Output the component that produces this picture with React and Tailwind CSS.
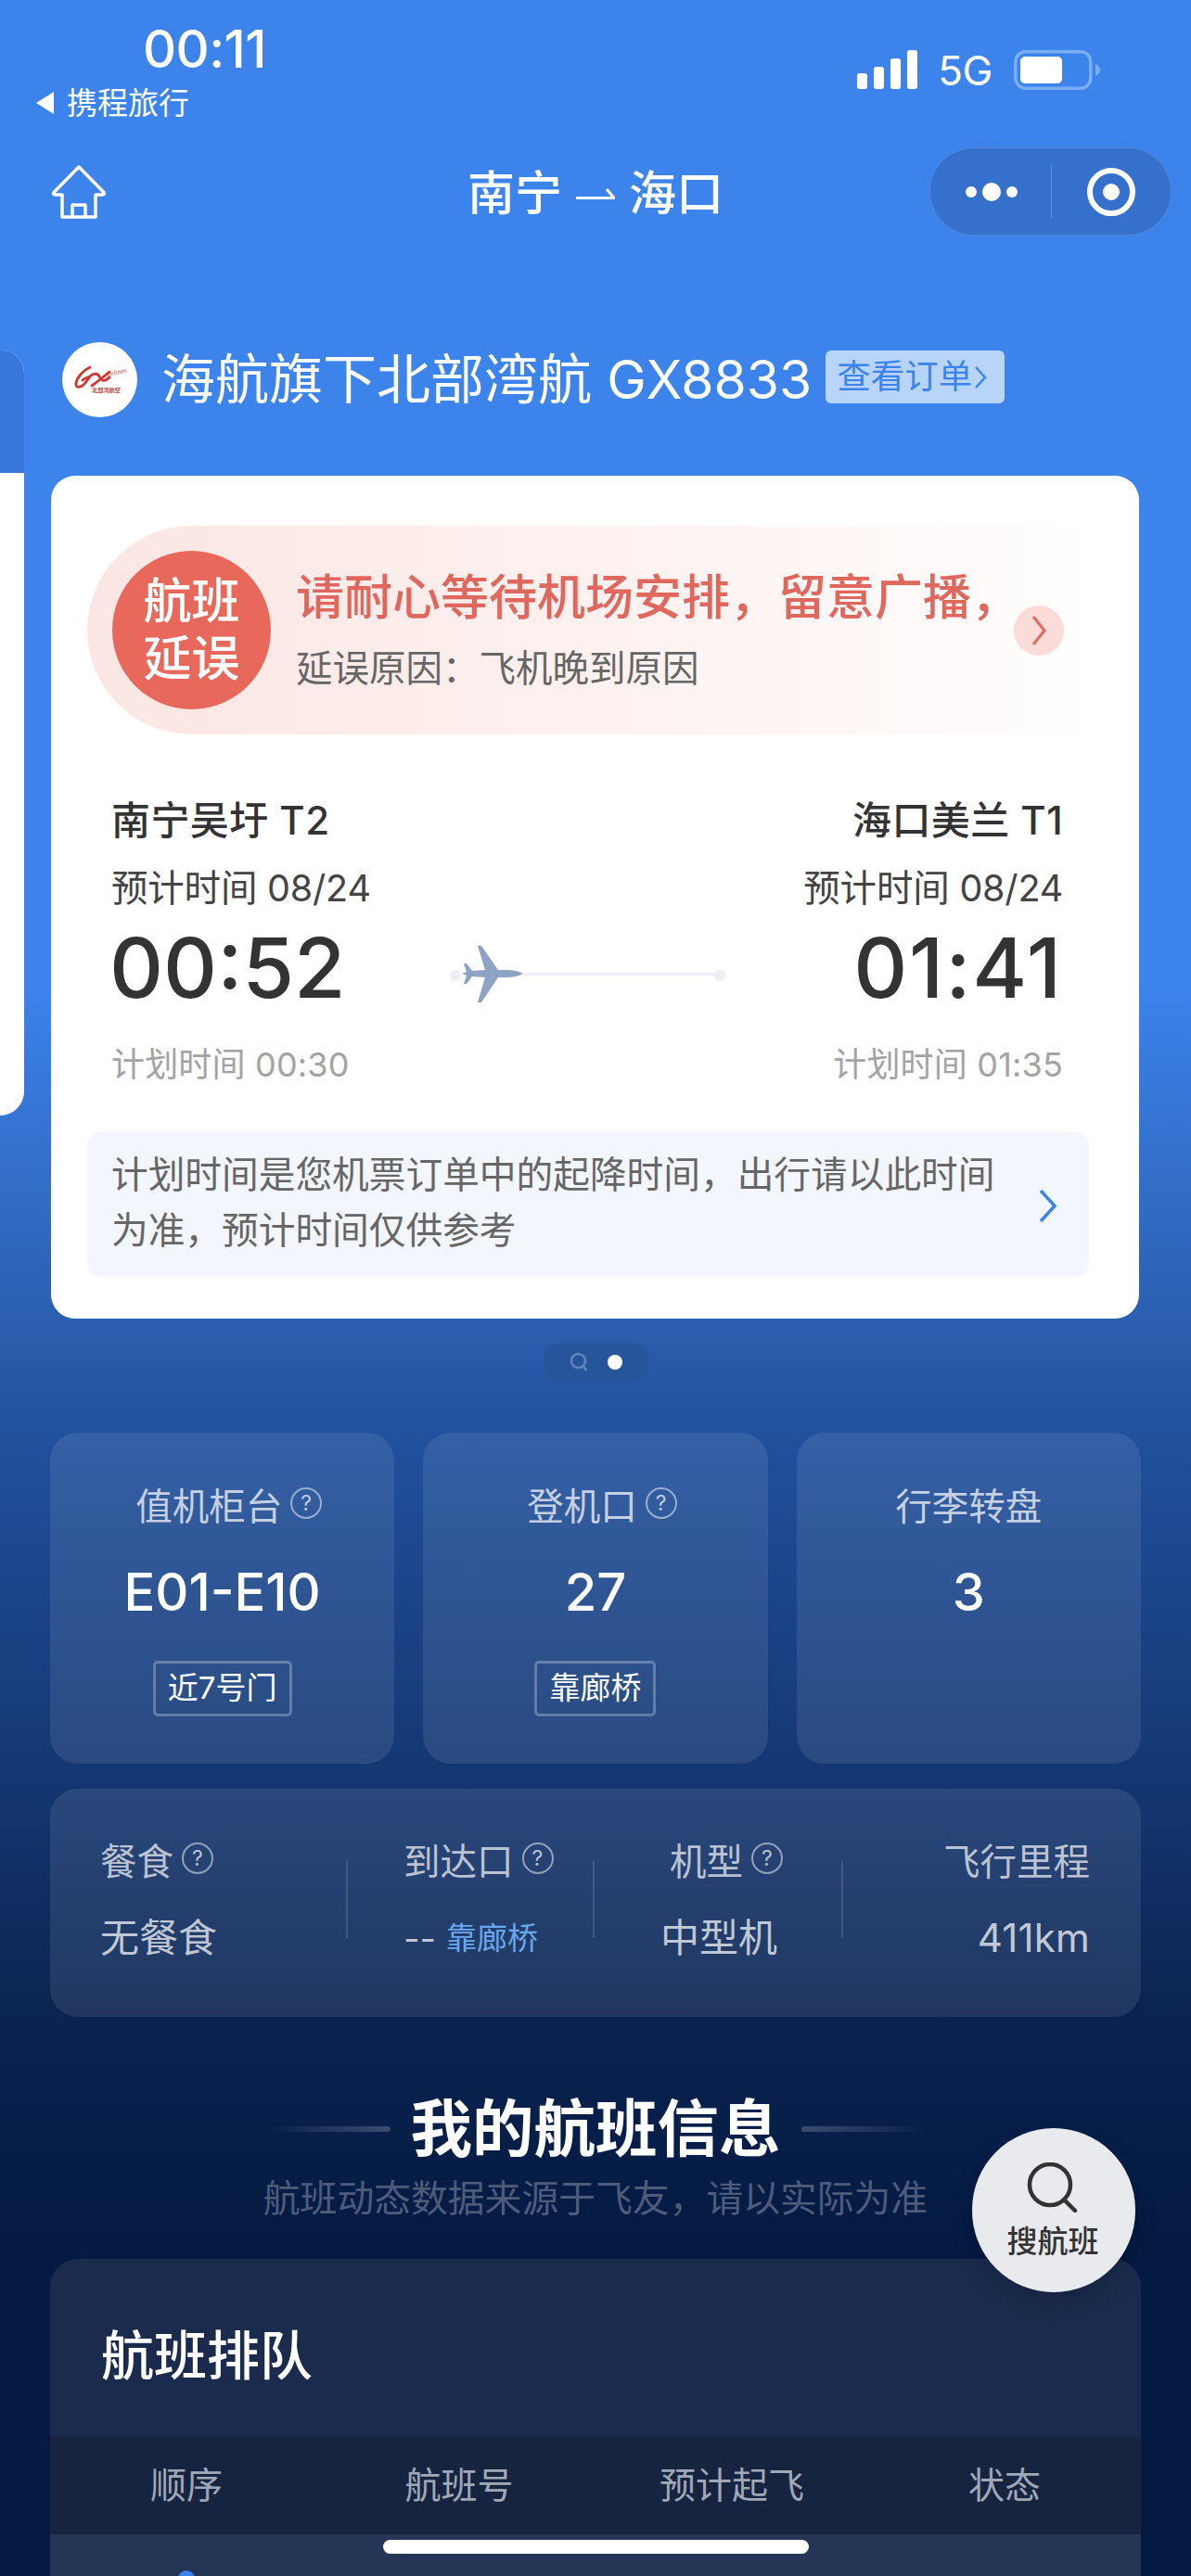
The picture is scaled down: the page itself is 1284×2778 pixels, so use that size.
import React from "react";

const Help = ({ className = "" }) => (
  <span className={`ml-[9px] w-[34px] h-[34px] rounded-full border-[2px] border-[#ffffff80] flex items-center justify-center text-[23px] leading-none text-[#ffffffb0] -translate-y-[4px] ${className}`}>?</span>
);

const InfoCard = ({ label, value, tag, help }) => (
  <div className="h-[357px] rounded-[30px] bg-[#ffffff17] flex flex-col items-center pt-[56px]">
    <div className={`flex items-center h-[48px] text-[39.500px] leading-[48px] text-[#ffffffb8] ${help ? "pl-[14px]" : ""}`}>
      <span>{label}</span>
      {help && <Help />}
    </div>
    <div className="mt-[33px] h-[70px] text-[56px] leading-[70px] font-medium text-white">{value}</div>
    {tag && (
      <div className="mt-[39px] h-[60px] px-[13px] rounded-[5px] border-[3px] border-[#ffffff45] flex items-center text-[33px] text-white">{tag}</div>
    )}
  </div>
);

const Label = ({ children, help, className = "" }) => (
  <div className={`flex items-center h-[48px] text-[39.500px] leading-[48px] text-[#ffffffb0] ${className}`}>
    <span>{children}</span>
    {help && <Help />}
  </div>
);

const Divider = () => <div className="mt-[78px] h-[83px] w-[2px] bg-[#ffffff22] shrink-0" />;

export default function App() {
  return (
    <div className="relative w-[1284px] h-[2778px] overflow-hidden font-['Inter','Noto_Sans_CJK_SC',sans-serif] bg-[linear-gradient(180deg,#3c83ec_0px,#3c83ec_1060px,#2b5eae_1430px,#20509c_1560px,#143670_1930px,#0a2350_2180px,#041a42_2420px,#041a42_2778px)]">
      {/* carousel neighbour peeking at the left edge */}
      <div className="absolute left-0 top-[377px] w-[26px] h-[826px] rounded-r-[26px] overflow-hidden bg-white">
        <div className="h-[133px] bg-[#3776da]" />
      </div>

      {/* status bar */}
      <div className="flex justify-between h-[150px]">
        <div className="pl-[38px] pt-[27px] flex flex-col">
          <div className="ml-[116px] h-[52px] text-[56px] leading-[52px] font-medium text-white tracking-[-0.01em]">00:11</div>
          <div className="mt-[12px] flex items-center h-[40px]">
            <svg width="20" height="24" viewBox="0 0 20 24"><path d="M20 0v24L1 12z" fill="#fff" /></svg>
            <span className="ml-[14px] text-[33px] leading-[40px] text-white">携程旅行</span>
          </div>
        </div>
        <div className="pt-[54px] pr-[98px] flex items-start">
          <svg width="65" height="42" viewBox="0 0 65 42" fill="#fff">
            <rect x="0" y="25" width="11" height="17" rx="3" />
            <rect x="18" y="18" width="11" height="24" rx="3" />
            <rect x="36" y="9" width="11" height="33" rx="3" />
            <rect x="54" y="0" width="11" height="42" rx="3" />
          </svg>
          <span className="ml-[22px] h-[42px] text-[44px] leading-[44px] text-white tracking-[-0.01em]">5G</span>
          <svg className="ml-[23px]" width="93" height="43" viewBox="0 0 93 43">
            <rect x="1.75" y="1.75" width="81" height="39.5" rx="11" fill="none" stroke="#79aef5" strokeWidth="3.5" />
            <rect x="7" y="7" width="45" height="29" rx="5" fill="#fff" />
            <path d="M88 15c3 1 5 4 5 6.500s-2 5.500-5 6.500z" fill="#79aef5" />
          </svg>
        </div>
      </div>

      {/* nav */}
      <div className="mt-[9px] h-[95px] px-[21px] grid grid-cols-[1fr_auto_1fr] items-center">
        <svg className="ml-[34px]" width="60" height="58" viewBox="0 0 60 58" fill="none" stroke="#fff" strokeWidth="3.500" strokeLinejoin="round">
          <path d="M30 2 3 29.500c-1 1.500 0 2.500 1.500 2.500H12v24h36V32h7.500c1.500 0 2.500-1 1.500-2.500z" />
          <path d="M23 56V43h14v13" />
        </svg>
        <div className="flex items-center text-[51px] leading-[60px] font-medium text-white translate-y-[2px]">
          <span>南宁</span>
          <svg className="mx-[15px]" width="42" height="16" viewBox="0 0 42 16" fill="none" stroke="#fff" strokeWidth="3"><path d="M0 12.500h41L33 3" /></svg>
          <span>海口</span>
        </div>
        <div className="justify-self-end w-[261px] h-[95px] rounded-full bg-[#3470cc] border border-[#ffffff26] flex items-center">
          <div className="w-[130px] flex items-center justify-center gap-[6px] pl-[2px]">
            <span className="w-[12px] h-[12px] rounded-full bg-white" />
            <span className="w-[20px] h-[20px] rounded-full bg-white" />
            <span className="w-[12px] h-[12px] rounded-full bg-white" />
          </div>
          <div className="w-[1px] h-[57px] bg-[#ffffff40]" />
          <div className="flex-1 flex items-center justify-center">
            <div className="w-[52px] h-[52px] rounded-full border-[6px] border-white flex items-center justify-center">
              <span className="w-[18px] h-[18px] rounded-full bg-white" />
            </div>
          </div>
        </div>
      </div>

      {/* airline */}
      <div className="mt-[115px] h-[81px] pl-[67px] flex items-center">
        <div className="w-[81px] h-[81px] rounded-full bg-white flex items-center justify-center shrink-0">
          <svg className="overflow-visible" width="60" height="40" viewBox="0 0 60 40" fill="none" stroke="#d5352f">
            <path d="M19 6C11 10 5 17 4 23c-1 6 5 5 8 2 3-3 5-6 7-9-3 1-6 2-8 4" strokeWidth="2.800" strokeLinecap="round" />
            <path d="M20 15c4-3 8-2 9 1 2 5 6 6 11 1M40 11C34 16 28 21 21 26" strokeWidth="2.800" strokeLinecap="round" />
            <text x="36" y="17" fontSize="7.500" fontStyle="italic" fill="#d5352f" stroke="none" fontFamily="Liberation Serif" transform="rotate(-14 36 17)">Airlines</text>
            <text x="21" y="33" fontSize="6.200" fontWeight="700" fill="#b54a44" stroke="none" fontFamily="Noto Sans CJK SC">北部湾航空</text>
          </svg>
        </div>
        <div className="ml-[26px] text-[58px] leading-[70px] text-white whitespace-nowrap">海航旗下北部湾航 <span className="text-[57px]">GX8833</span></div>
        <div className="ml-[15px] -translate-y-[3px] h-[57px] w-[193px] rounded-[6px] bg-[#b8d4f8] flex items-center pl-[12px] text-[36.500px] text-[#3c83ec] whitespace-nowrap">
          查看订单
          <svg className="ml-[2px]" width="14" height="28" viewBox="0 0 14 28" fill="none" stroke="#3c83ec" strokeWidth="2.500"><path d="M2 3l10 11L2 25" /></svg>
        </div>
      </div>

      {/* main card */}
      <div className="mt-[63px] mx-[55px] w-[1173px] h-[909px] rounded-[26px] bg-white pt-[54px]">
        <div className="ml-[39px] w-[1071px] h-[225px] rounded-l-full rounded-r-[60px] bg-[linear-gradient(90deg,#fbe6e3_0%,#fdf1ef_50%,#fffdfd_100%)] pl-[27px] pr-[18px] flex items-center">
          <div className="w-[171px] h-[171px] rounded-full bg-[#e8695c] shrink-0 flex items-center justify-center text-center text-[52px] leading-[62px] font-medium text-white">
            航班<br />延误
          </div>
          <div className="ml-[27px] flex-1 min-w-0 whitespace-nowrap">
            <div className="text-[52px] leading-[62px] font-medium text-[#e0675d]">请耐心等待机场安排，留意广播，</div>
            <div className="mt-[21px] text-[39.500px] leading-[48px] text-[#666666]">延误原因：飞机晚到原因</div>
          </div>
          <div className="ml-[24px] w-[54px] h-[54px] rounded-full bg-[#fbdcd8] shrink-0 flex items-center justify-center">
            <svg width="18" height="34" viewBox="0 0 18 34" fill="none" stroke="#e8695c" strokeWidth="3"><path d="M3 2l12 15L3 32" /></svg>
          </div>
        </div>

        <div className="pl-[65px] pr-[82px]">
          <div className="mt-[68px] flex justify-between text-[42px] leading-[50px] font-medium text-[#333333] tracking-[0.01em]">
            <span>南宁吴圩 T2</span>
            <span>海口美兰 T1</span>
          </div>
          <div className="mt-[24px] flex justify-between text-[39.500px] leading-[48px] text-[#444444] tracking-[-0.005em]">
            <span>预计时间 08/24</span>
            <span>预计时间 08/24</span>
          </div>
          <div className="mt-[17px] grid grid-cols-[365px_297px_1fr]">
            <div className="-ml-[2px] text-[90px] leading-[90px] font-medium text-[#333333]">00:52</div>
            <svg className="mt-[19px]" width="297" height="66" viewBox="0 0 297 66">
              <circle cx="6" cy="34" r="6" fill="#eeeff5" />
              <circle cx="291" cy="34" r="6" fill="#eeeff5" />
              <rect x="70" y="31" width="221" height="3" fill="#eeeff6" />
              <path d="M78 32C75 29 68 28 60 28L52 28 34 2 30 2 38 28 24 29 18 21 15 21 18 30 13 32 18 34 15 43 18 43 24 35 38 36 30 63 34 63 52 36 60 36C68 36 75 35 78 32Z" fill="#8ea2c4" />
            </svg>
            <div className="text-right text-[90px] leading-[90px] font-medium text-[#333333] tracking-[0.02em]">01:41</div>
          </div>
          <div className="mt-[37px] flex justify-between text-[36px] leading-[44px] text-[#a3a3a3] tracking-[0.005em]">
            <span>计划时间 00:30</span>
            <span>计划时间 01:35</span>
          </div>
        </div>

        <div className="mt-[51px] ml-[39px] w-[1080px] h-[156px] rounded-[14px] bg-[#f3f6fd] pl-[26px] pr-[34px] pt-[16px] flex justify-between">
          <div className="w-[960px] text-[39.700px] leading-[60px] text-[#666666]">
            计划时间是您机票订单中的起降时间，出行请以此时间为准，预计时间仅供参考
          </div>
          <svg className="mt-[45px]" width="20" height="37" viewBox="0 0 20 37" fill="none" stroke="#3c83ec" strokeWidth="3.500"><path d="M2 2l15 16.500L2 35" /></svg>
        </div>
      </div>

      {/* pagination */}
      <div className="mt-[27px] mx-auto w-[113px] h-[39px] rounded-[14px] bg-[#27559b] flex items-center justify-center gap-[21px]">
        <svg width="20" height="22" viewBox="0 0 20 22" fill="none" stroke="#5f86bf" strokeWidth="2.500"><circle cx="9.500" cy="9.500" r="7.500" /><path d="M14.500 15l4 5" /></svg>
        <span className="w-[16px] h-[16px] rounded-full bg-white" />
      </div>

      {/* info cards */}
      <div className="mt-[57px] mx-[54px] grid grid-cols-3 gap-[31px]">
        <InfoCard label="值机柜台" value="E01-E10" tag="近7号门" help />
        <InfoCard label="登机口" value="27" tag="靠廊桥" help />
        <InfoCard label="行李转盘" value="3" />
      </div>

      <div className="mt-[27px] mx-[54px] h-[246px] rounded-[30px] bg-[#ffffff17] flex">
        <div className="w-[319px] pl-[54px] pt-[55px] shrink-0">
          <Label help>餐食</Label>
          <div className="mt-[30px] h-[56px] text-[42px] leading-[56px] text-[#ffffffb8]">无餐食</div>
        </div>
        <Divider />
        <div className="w-[264px] pl-[60px] pt-[55px] shrink-0">
          <Label help>到达口</Label>
          <div className="mt-[30px] h-[56px] flex items-center text-[#ffffffb8]">
            <span className="text-[38px] leading-[56px]">--</span>
            <span className="ml-[11px] text-[33px] leading-[56px] text-[#6aa8ee]">靠廊桥</span>
          </div>
        </div>
        <Divider />
        <div className="w-[266px] pl-[71px] pt-[55px] shrink-0">
          <Label help className="ml-[10px]">机型</Label>
          <div className="mt-[30px] h-[56px] text-[42px] leading-[56px] text-[#ffffffb8]">中型机</div>
        </div>
        <Divider />
        <div className="flex-1 pr-[55px] pt-[55px] text-right">
          <Label className="justify-end">飞行里程</Label>
          <div className="mt-[30px] h-[56px] text-[42px] leading-[56px] text-[#ffffffb8] tracking-[0.005em]">411km</div>
        </div>
      </div>

      {/* section title */}
      <div className="mt-[81px] h-[80px] flex items-center justify-center">
        <div className="w-[135px] h-[6px] rounded-r-full bg-[linear-gradient(90deg,#04194100,#3a4d70)]" />
        <div className="mx-[22px] text-[66.500px] leading-[80px] font-semibold text-white">我的航班信息</div>
        <div className="w-[135px] h-[6px] rounded-l-full bg-[linear-gradient(90deg,#3a4d70,#04194100)]" />
      </div>
      <div className="mt-[10px] h-[50px] text-center text-[39.800px] leading-[50px] text-[#4d5c7a]">航班动态数据来源于飞友，请以实际为准</div>

      {/* queue table */}
      <div className="mt-[40px] mx-[54px] rounded-t-[30px] bg-[#1a2b4d]">
        <div className="pt-[73px] pl-[55px] text-[57px] leading-[64px] font-medium text-white">航班排队</div>
        <div className="mt-[55px] h-[105px] bg-[#172440] grid grid-cols-4 items-center text-center text-[39px] text-[#a0a8b8]">
          <span>顺序</span>
          <span>航班号</span>
          <span>预计起飞</span>
          <span>状态</span>
        </div>
        <div className="h-[200px] bg-[#243556] grid grid-cols-4">
          <div className="pt-[39px] flex justify-center">
            <span className="w-[18px] h-[18px] rounded-full bg-[#3c83ec]" />
          </div>
        </div>
      </div>

      {/* floating search */}
      <div className="absolute left-[1048px] top-[2295px] w-[176px] h-[177px] rounded-full bg-[#e9eaee] shadow-[0_8px_24px_rgba(0,0,0,0.18)] flex flex-col items-center pt-[37px]">
        <svg className="-ml-[5px]" width="56" height="54" viewBox="0 0 56 54" fill="none" stroke="#333333" strokeWidth="4.500" strokeLinecap="round"><circle cx="26" cy="24" r="22" /><path d="M42 41l11 11" /></svg>
        <div className="mt-[9px] -ml-[2px] text-[33px] leading-[44px] font-medium text-[#333333]">搜航班</div>
      </div>

      {/* home indicator */}
      <div className="absolute left-[413px] top-[2739px] w-[459px] h-[15px] rounded-full bg-white" />
    </div>
  );
}
